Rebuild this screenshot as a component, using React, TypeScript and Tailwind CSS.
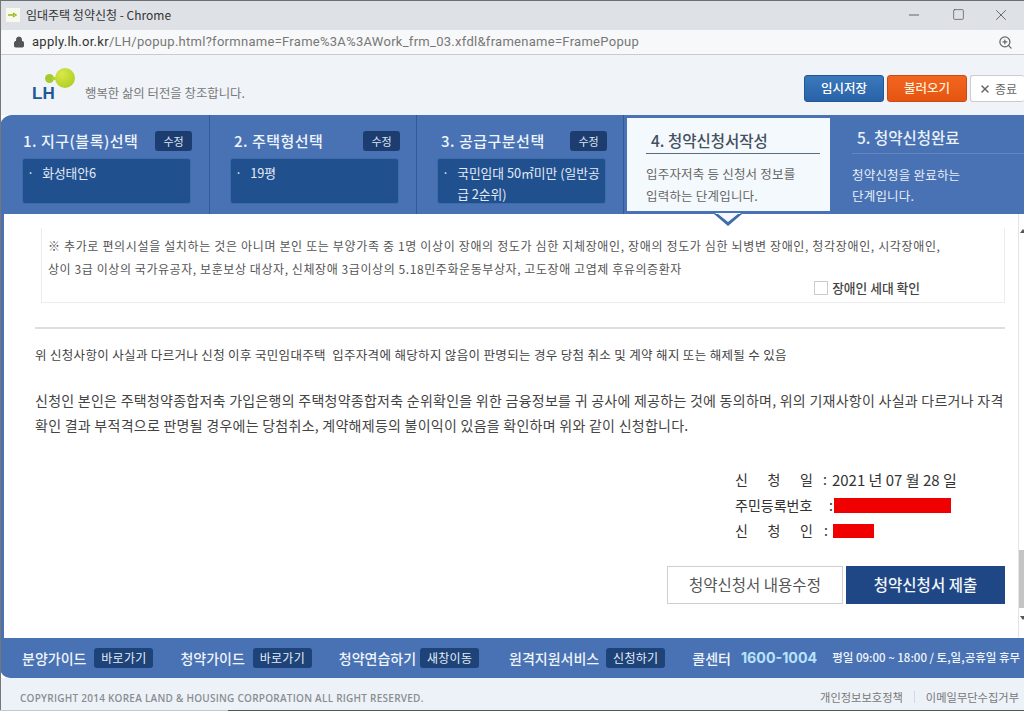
import { Lock, Minus, Square, X, ZoomIn } from 'lucide-react';
import type { ReactNode } from 'react';

const font = { fontFamily: '"Noto Sans CJK KR", "Liberation Sans", sans-serif' };

function Step({
  title,
  value,
  className,
  titleClass,
}: {
  title: string;
  value: ReactNode;
  className: string;
  titleClass: string;
}) {
  return (
    <div className={`flex flex-col border-r border-[#2f5c98] pt-[16px] ${className}`}>
      <div className="flex h-[20px] w-[170px] items-center justify-between">
        <span className={`whitespace-nowrap text-[15px] font-medium leading-[20px] tracking-[0.5px] text-[#eef4fb] ${titleClass}`}>{title}</span>
        <span className="flex h-[20px] w-[37px] shrink-0 items-center justify-center rounded-[3px] bg-[#1d3d70] text-[11px] text-[#dfe8f3]">
          수정
        </span>
      </div>
      <div className="mt-[7px] flex h-[46px] w-[169px] gap-[8px] rounded-[3px] border border-[#3e6cab] bg-[#21508f] pl-[4px] pt-[3px] text-[12.75px] leading-[21px] text-[#e3ebf5]">
        <span>·</span>
        <span className="w-[148px]">{value}</span>
      </div>
    </div>
  );
}

function FooterLink({
  label,
  action,
  className,
  gap,
}: {
  label: string;
  action: string;
  className?: string;
  gap: string;
}) {
  return (
    <div className={`flex items-center ${gap} ${className ?? ''}`}>
      <span className="text-[14px] font-medium text-[#f0f5fb]">{label}</span>
      <span className="flex h-[20px] w-[59px] items-center justify-center rounded-[3px] bg-[#1d4379] text-[12px] tracking-[0.3px] text-[#e4ecf6]">
        {action}
      </span>
    </div>
  );
}

function SignRow({ label, children }: { label: string[]; children: ReactNode }) {
  return (
    <div className="flex h-[25.5px] items-center text-[14px] text-[#333]">
      <span className="flex w-[78px] justify-between">
        {label.map((c) => (
          <span key={c}>{c}</span>
        ))}
      </span>
      {children}
    </div>
  );
}

export default function App() {
  return (
    <div style={font} className="relative h-[718px] w-[1024px] overflow-hidden bg-white">
      <div className="flex h-[30px] items-center justify-between border-t border-[#6b7075] bg-[#dee1e6] pb-[2px] pl-[6px] pr-[14px]">
        <div className="flex items-center gap-[6px]">
          <svg width="14" height="14" viewBox="0 0 14 14">
            <rect width="14" height="14" fill="#f8f8ee" />
            <path d="M2 7 H8 M7 5 L10 7 L7 9" fill="none" stroke="#9ab81e" strokeWidth="1.5" />
          </svg>
          <span className="text-[12px] text-[#333]">임대주택 청약신청 - Chrome</span>
        </div>
        <div className="flex items-center text-[#444]">
          <Minus size={16} strokeWidth={1.2} />
          <Square size={13} strokeWidth={1.2} className="ml-[30px]" />
          <X size={18} strokeWidth={1} className="ml-[27px]" />
        </div>
      </div>
      <div className="flex h-[25px] items-center justify-between border-b border-[#c9cbce] bg-[#f7f8f9] pl-[13px] pr-[11px]">
        <div className="flex items-center gap-[7px] text-[13px] tracking-[0.28px]" style={{ fontFamily: 'Roboto, sans-serif' }}>
          <Lock size={12} className="fill-[#555] text-[#555]" />
          <span>
            <span className="text-[#333]">apply.lh.or.kr</span>
            <span className="text-[#777]">/LH/popup.html?formname=Frame%3A%3AWork_frm_03.xfdl&amp;framename=FramePopup</span>
          </span>
        </div>
        <ZoomIn size={15} className="text-[#666]" />
      </div>

      <div className="flex h-[60px] items-start justify-between bg-[#f0f4f9] pl-[32px]">
        <div className="flex items-end">
          <div className="relative mt-[14px] h-[32px] w-[53px]">
            <span className="absolute left-[13px] top-[5px] h-[9px] w-[9px] rounded-full bg-[#a4cb2e]" />
            <span className="absolute left-[20px] top-[8px] h-[3px] w-[6px] bg-[#b5d334]" />
            <span className="absolute left-[23px] top-[-1px] h-[20px] w-[20px] rounded-full bg-[radial-gradient(circle_at_35%_30%,#d8e84a,#a6c81a)]" />
            <span
              className="absolute left-0 top-[16px] text-[17px] font-black leading-[17px] text-[#1b5a96]"
              style={{ fontFamily: '"Liberation Sans", sans-serif' }}
            >
              LH
            </span>
          </div>
          <span className="mb-[-2px] text-[12.4px] text-[#777]">행복한 삶의 터전을 창조합니다.</span>
        </div>
        <div className="mt-[20px] flex gap-[3px]">
          <span className="flex h-[27px] w-[80px] items-center justify-center rounded-[3px] border border-[#1f5797] bg-[linear-gradient(#3a78bc,#2a62a8)] text-[12.5px] font-medium text-white">
            임시저장
          </span>
          <span className="flex h-[27px] w-[80px] items-center justify-center rounded-[3px] border border-[#cc4a12] bg-[linear-gradient(#f2651f,#e55512)] text-[12.5px] font-medium text-[#fff0d8]">
            불러오기
          </span>
          <span className="flex h-[27px] w-[54px] items-center gap-[4px] rounded-[3px] border border-[#ccc] border-r-0 bg-white pl-[8px] text-[12px] text-[#666]">
            <X size={12} strokeWidth={3} />
            <span className="whitespace-nowrap">종료</span>
          </span>
        </div>
      </div>

      <div className="relative flex h-[99px] rounded-tl-[12px] bg-[#4872b4]">
        <Step className="w-[210px] pl-[22px]" titleClass="pl-[1px]" title="1. 지구(블록)선택" value="화성태안6" />
        <Step className="w-[207px] pl-[20px]" titleClass="pl-[4px]" title="2. 주택형선택" value="19평" />
        <Step className="mr-[3px] w-[207px] pl-[20px]" titleClass="pl-[4px]" title="3. 공급구분선택" value="국민임대 50㎡미만 (일반공급 2순위)" />
        <div className="relative mt-[3px] h-[93px] w-[203px] bg-[#f4f9fd] pl-[19px] pr-[10px] pt-[10px]">
          <div className="h-[26px] border-b border-[#5a6b80] pl-[5px] text-[15.5px] font-medium leading-[24px] text-[#44505e]">
            4. 청약신청서작성
          </div>
          <p className="mt-[9px] whitespace-nowrap text-[12.5px] leading-[22px] tracking-[0.2px] text-[#666]">
            입주자저축 등 신청서 정보를
            <br />
            입력하는 단계입니다.
          </p>
        </div>
        <div className="ml-[22px] flex-1 pt-[9px]">
          <div className="h-[30px] border-b border-[#5f88c2] pl-[5px] text-[15.5px] font-medium leading-[26px] text-[#eaf1f9]">
            5. 청약신청완료
          </div>
          <p className="mt-[10px] whitespace-nowrap text-[12.5px] leading-[21px] tracking-[0.2px] text-[#e8eff8]">
            청약신청을 완료하는
            <br />
            단계입니다.
          </p>
        </div>
        <svg className="absolute left-[712px] top-[96px] z-10" width="32" height="16" viewBox="0 0 32 16">
          <path d="M3 2 H29 L16 13 Z" fill="#f4f9fd" />
          <path d="M2 3 L16 15 L30 3 L26 3 L16 11 L6 3 Z" fill="#3f6ca6" />
        </svg>
      </div>

      <div className="relative flex h-[424px] flex-col border-l-[4px] border-[#4872b4] bg-white pl-[31px] pr-[19px]">
        <div className="ml-[6px] mt-[14px] h-[75px] border-b border-l border-r border-[#ececec] pl-[6px] pt-[6px] text-[12px] leading-[23px] tracking-[0.65px] text-[#555]">
          <p className="whitespace-nowrap">※ 추가로 편의시설을 설치하는 것은 아니며 본인 또는 부양가족 중 1명 이상이 장애의 정도가 심한 지체장애인, 장애의 정도가 심한 뇌병변 장애인, 청각장애인, 시각장애인,</p>
          <p className="whitespace-nowrap tracking-[0.58px]">상이 3급 이상의 국가유공자, 보훈보상 대상자, 신체장애 3급이상의 5.18민주화운동부상자, 고도장애 고엽제 후유의증환자</p>
          <div className="mr-[84px] flex h-[15px] items-center justify-end gap-[4px] tracking-normal text-[#444]">
            <span className="h-[14px] w-[14px] border border-[#ccc] bg-white" />
            <span className="text-[12.75px] font-medium">장애인 세대 확인</span>
          </div>
        </div>
        <div className="mt-[24px] h-[2px] bg-[#dedede]" />
        <p className="mt-[17px] whitespace-nowrap text-[12.5px] leading-[18px] tracking-[0.33px] text-[#444]">
          위 신청사항이 사실과 다르거나 신청 이후 국민임대주택&nbsp; 입주자격에 해당하지 않음이 판명되는 경우 당첨 취소 및 계약 해지 또는 해제될 수 있음
        </p>
        <p className="mt-[24px] whitespace-nowrap text-[14px] leading-[25px] tracking-[0.26px] text-[#444]">
          신청인 본인은 주택청약종합저축 가입은행의 주택청약종합저축 순위확인을 위한 금융정보를 귀 공사에 제공하는 것에 동의하며, 위의 기재사항이 사실과 다르거나 자격
          <br />
          확인 결과 부적격으로 판명될 경우에는 당첨취소, 계약해제등의 불이익이 있음을 확인하며 위와 같이 신청합니다.
        </p>
        <div className="ml-[700px] mt-[29px]">
          <SignRow label={['신', '청', '일']}>
            <span className="ml-[10px]">:</span>
            <span className="ml-[5px] whitespace-nowrap text-[15px]">2021 년 07 월 28 일</span>
          </SignRow>
          <SignRow label={['주민등록번호']}>
            <span className="ml-[16px]">:</span>
            <span className="ml-[1px] h-[15px] w-[117px] bg-[#f00000]" />
          </SignRow>
          <SignRow label={['신', '청', '인']}>
            <span className="ml-[11px]">:</span>
            <span className="ml-[5px] h-[14px] w-[41px] bg-[#f00000]" />
          </SignRow>
        </div>
        <div className="mt-[22px] flex justify-end gap-[3px]">
          <span className="flex h-[38px] w-[176px] items-center justify-center border border-[#cfcfcf] bg-white text-[15.5px] text-[#555]">
            청약신청서 내용수정
          </span>
          <span className="flex h-[38px] w-[159px] items-center justify-center bg-[#1f4785] text-[15.5px] font-medium text-[#f2f5fa]">
            청약신청서 제출
          </span>
        </div>
        <div className="absolute bottom-0 right-0 top-0 w-[6px] border-l border-[#e4e4e4] bg-white">
          <span className="absolute left-[1px] top-[15px] h-0 w-0 border-x-[3px] border-b-[4px] border-x-transparent border-b-[#555]" />
          <span className="absolute left-0 top-[336px] h-[58px] w-full bg-[#c4c4c4]" />
          <span className="absolute bottom-[18px] left-[1px] h-0 w-0 border-x-[3px] border-t-[4px] border-x-transparent border-t-[#555]" />
        </div>
      </div>

      <div className="flex h-[40px] items-center rounded-bl-[10px] bg-[#4872b4] pl-[22px] whitespace-nowrap">
        <FooterLink gap="gap-[8px]" label="분양가이드" action="바로가기" />
        <FooterLink gap="gap-[8px]" className="ml-[27px]" label="청약가이드" action="바로가기" />
        <FooterLink gap="gap-[4px]" className="ml-[27px]" label="청약연습하기" action="새창이동" />
        <FooterLink gap="gap-[7px]" className="ml-[30px]" label="원격지원서비스" action="신청하기" />
        <span className="ml-[27px] text-[14px] font-medium text-[#f0f5fb]">콜센터</span>
        <span className="ml-[10px] text-[14.25px] font-bold text-[#b9e2fb]" style={{ fontFamily: 'Inter, sans-serif' }}>
          1600-1004
        </span>
        <span className="ml-[15px] text-[11.5px] font-medium text-[#f0f5fb]">평일 09:00 ~ 18:00 / 토,일,공휴일 휴무</span>
      </div>
      <div className="flex h-[33px] items-start justify-between border-b border-[#c5c8cc] bg-[#edf2f8] pl-[20px] pr-[5px] pt-[7px]">
        <span className="text-[10px] font-semibold leading-[26px] tracking-[0.25px] text-[#8a8d91]" style={{ fontFamily: '"Open Sans", sans-serif' }}>
          COPYRIGHT 2014 KOREA LAND &amp; HOUSING CORPORATION ALL RIGHT RESERVED.
        </span>
        <div className="flex h-[24px] items-center text-[11.25px] text-[#777]">
          <span>개인정보보호정책</span>
          <span className="mx-[11px] h-[12px] w-px bg-[#d5d9de]" />
          <span>이메일무단수집거부</span>
        </div>
      </div>
      <div className="absolute left-[228px] right-0 top-[710px] h-px bg-[#555]" />
      <div className="absolute left-0 top-0 h-[710px] w-px bg-[#777]" />
    </div>
  );
}
